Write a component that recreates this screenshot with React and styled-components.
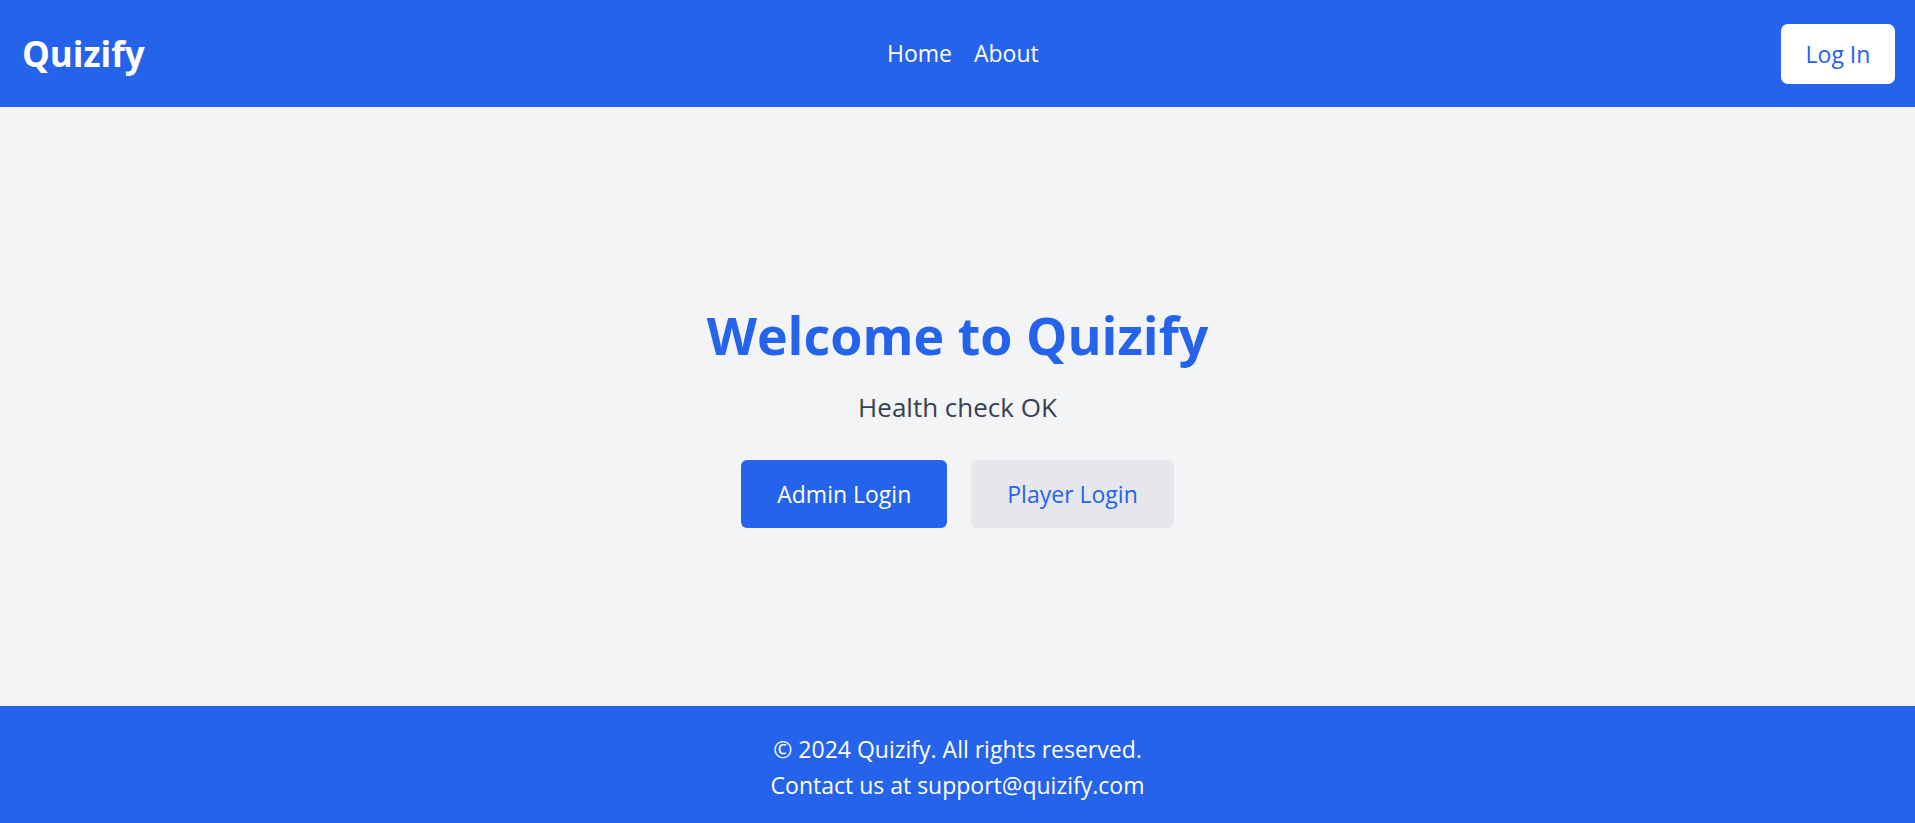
import React from 'react'
import styled, { createGlobalStyle } from 'styled-components'

const GlobalStyle = createGlobalStyle`
    * {
        box-sizing: border-box;
    }
    body {
        margin: 0;
        font-family: "Open Sans", "Noto Sans", sans-serif;
        background: #f3f4f6;
    }
`

function App() {
    return (
        <Page>
            <GlobalStyle />
            <Header>
                <Logo>Quizify</Logo>
                <Nav>
                    <NavLink href="#">Home</NavLink>
                    <NavLink href="#">About</NavLink>
                </Nav>
                <LoginButton>Log In</LoginButton>
            </Header>
            <Main>
                <Title>Welcome to Quizify</Title>
                <Status>Health check OK</Status>
                <Actions>
                    <ActionButton $primary>Admin Login</ActionButton>
                    <ActionButton>Player Login</ActionButton>
                </Actions>
            </Main>
            <Footer>
                <FooterLine>© 2024 Quizify. All rights reserved.</FooterLine>
                <FooterLine>Contact us at support@quizify.com</FooterLine>
            </Footer>
        </Page>
    )
}

export default App

const Page = styled.div`
    min-height: 100vh;
    display: flex;
    flex-direction: column;
`

const Header = styled.header`
    height: 107px;
    background: #2563eb;
    display: flex;
    align-items: center;
    justify-content: space-between;
    padding: 0 20px 0 22px;
    color: #fff;
`

const Logo = styled.div`
    font-size: 35px;
    font-weight: 700;
    line-height: 1;
`

const Nav = styled.nav`
    display: flex;
    gap: 22px;
`

const NavLink = styled.a`
    color: #fff;
    text-decoration: none;
    font-size: 23px;
    line-height: 35px;
`

const LoginButton = styled.button`
    width: 114px;
    height: 60px;
    border: none;
    border-radius: 7px;
    background: #fff;
    color: #2563eb;
    font-family: inherit;
    font-size: 23px;
    cursor: pointer;
`

const Main = styled.main`
    flex: 1;
    display: flex;
    flex-direction: column;
    align-items: center;
    justify-content: center;
    padding-top: 20px;
`

const Title = styled.h1`
    margin: 0 0 25px;
    color: #2563eb;
    font-size: 52px;
    font-weight: 700;
    line-height: 60px;
`

const Status = styled.p`
    margin: 0 0 35px;
    color: #374151;
    font-size: 26px;
    line-height: 35px;
`

const Actions = styled.div`
    display: flex;
    gap: 24px;
`

const ActionButton = styled.button`
    height: 68px;
    padding: 0 36px;
    border: none;
    border-radius: 6px;
    background: ${p => (p.$primary ? '#2563eb' : '#e5e7eb')};
    color: ${p => (p.$primary ? '#fff' : '#2563eb')};
    font-family: inherit;
    font-size: 23px;
    cursor: pointer;
`

const Footer = styled.footer`
    height: 117px;
    padding-top: 5px;
    background: #2563eb;
    color: #fff;
    display: flex;
    flex-direction: column;
    align-items: center;
    justify-content: center;
`

const FooterLine = styled.p`
    margin: 0;
    font-size: 23px;
    line-height: 36px;
`
